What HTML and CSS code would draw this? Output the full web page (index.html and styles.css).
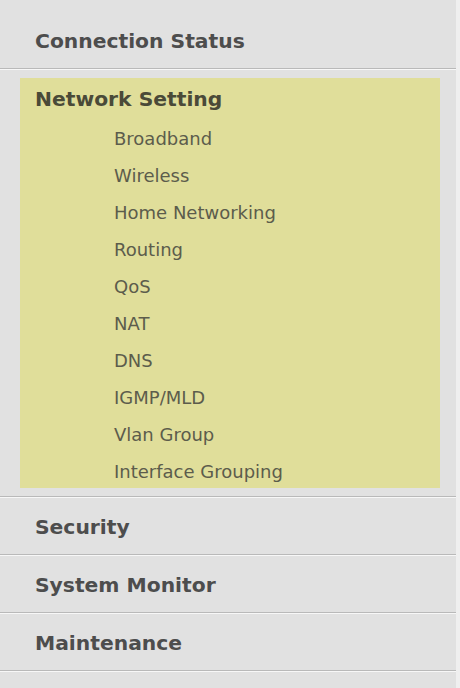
FILE: index.html
```html
<!DOCTYPE html>
<html lang="en">
<head>
    <meta charset="UTF-8">
    <title>Menu</title>
    <link rel="stylesheet" href="styles.css">
</head>
<body>
    <div class="menu">
        <div class="item first"><span class="title">Connection Status</span></div>
        <div class="item open">
            <div class="box">
                <div class="title">Network Setting</div>
                <ul class="sub">
                    <li>Broadband</li>
                    <li>Wireless</li>
                    <li>Home Networking</li>
                    <li>Routing</li>
                    <li>QoS</li>
                    <li>NAT</li>
                    <li>DNS</li>
                    <li>IGMP/MLD</li>
                    <li>Vlan Group</li>
                    <li>Interface Grouping</li>
                </ul>
            </div>
        </div>
        <div class="item"><span class="title">Security</span></div>
        <div class="item"><span class="title">System Monitor</span></div>
        <div class="item"><span class="title">Maintenance</span></div>
    </div>
</body>
</html>
```

FILE: styles.css
```css
body {
    margin: 0;
    background-color: #efefef;
    font-family: "DejaVu Sans", sans-serif;
}
.menu {
    width: 456px;
    height: 688px;
    background-color: #e1e1e1;
}
.item {
    height: 56px;
    display: flex;
    align-items: center;
    padding-left: 35px;
    border-bottom: 1px solid #b9b9b9;
    box-shadow: 0 1px 0 #f7f7f7;
    margin-bottom: 1px;
}
.item .title {
    padding-top: 1px;
}
.item.first {
    height: 56px;
    padding-top: 12px;
}
.title {
    font-size: 20.3px;
    font-weight: bold;
    color: #4d4d4d;
}
.item.open {
    display: block;
    height: auto;
    padding: 8px 16px 8px 20px;
}
.box {
    background-color: #e0de9a;
    height: 410px;
}
.box .title {
    color: #4a4a38;
    padding: 9px 0 0 15px;
    height: 33px;
}
.sub {
    list-style: none;
    margin: 0;
    padding: 0 0 0 94px;
}
.sub li {
    height: 37px;
    line-height: 37px;
    font-size: 18px;
    color: #5c5c4c;
}
```
